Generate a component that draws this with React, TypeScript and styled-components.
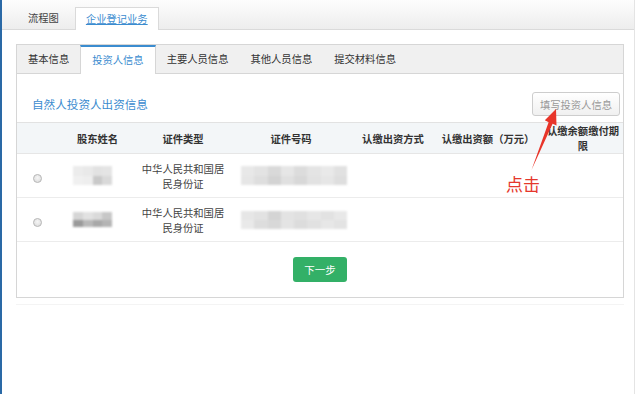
import React from "react";
import styled, { createGlobalStyle, css } from "styled-components";

const GlobalStyle = createGlobalStyle`
  *, *::before, *::after {
    box-sizing: border-box;
  }
  html, body {
    margin: 0;
    padding: 0;
    background: #ffffff;
  }
  body {
    font-family: "Noto Sans CJK SC", "Noto Sans", sans-serif;
    font-size: 10.3px;
    color: #333333;
  }
`;

type MosaicSpec = {
  cols: number;
  width: number;
  height: number;
  cells: string[];
};

const nameMosaics: MosaicSpec[] = [
  {
    cols: 4,
    width: 39,
    height: 19,
    cells: ["#ececec", "#e9e9e9", "#e2e2e2", "#e4e4e4", "#f0f0f0", "#eeeeee", "#c9c9c9", "#d9d9d9"],
  },
  {
    cols: 4,
    width: 39,
    height: 15,
    cells: ["#d6d6d6", "#e2e2e2", "#dadada", "#c7c7c7", "#9a9a9a", "#b8b8b8", "#a8a8a8", "#b4b4b4"],
  },
];

const idMosaics: MosaicSpec[] = [
  {
    cols: 8,
    width: 106,
    height: 19,
    cells: [
      "#e8e8e8", "#e3e3e3", "#d9d9d9", "#e6e6e6", "#dcdcdc", "#e4e4e4", "#e9e9e9", "#e1e1e1",
      "#e6e6e6", "#dedede", "#d3d3d3", "#e0e0e0", "#d8d8d8", "#e2e2e2", "#e6e6e6", "#dedede",
    ],
  },
  {
    cols: 8,
    width: 106,
    height: 18,
    cells: [
      "#e6e6e6", "#e2e2e2", "#d4d4d4", "#e3e3e3", "#e0e0e0", "#e6e6e6", "#e2e2e2", "#e8e8e8",
      "#e9e9e9", "#dddddd", "#d8d8d8", "#e4e4e4", "#dcdcdc", "#e1e1e1", "#e7e7e7", "#e3e3e3",
    ],
  },
];

const columns = [41, 79, 92, 124, 80, 110, 80];

const headers = ["", "股东姓名", "证件类型", "证件号码", "认缴出资方式", "认缴出资额（万元）", "认缴余额缴付期限"];

const subTabs = ["基本信息", "投资人信息", "主要人员信息", "其他人员信息", "提交材料信息"];

function Mosaic({ spec, shift }: { spec: MosaicSpec; shift?: number }) {
  return (
    <MosaicGrid $cols={spec.cols} $w={spec.width} $h={spec.height} $shift={shift || 0}>
      {spec.cells.map((c, i) => (
        <span key={i} style={{ background: c }} />
      ))}
    </MosaicGrid>
  );
}

export default function App() {
  return (
    <>
      <GlobalStyle />
      <Page>
        <TopTabs>
          <TopTab>流程图</TopTab>
          <TopTab $active>企业登记业务</TopTab>
        </TopTabs>

        <Content>
          <Panel>
            <SubTabs>
              {subTabs.map((t) => (
                <SubTab key={t} $active={t === "投资人信息"}>
                  {t}
                </SubTab>
              ))}
            </SubTabs>

            <Toolbar>
              <SectionTitle>自然人投资人出资信息</SectionTitle>
              <GhostButton>填写投资人信息</GhostButton>
            </Toolbar>

            <Table>
              <colgroup>
                {columns.map((w, i) => (
                  <col key={i} style={{ width: w }} />
                ))}
              </colgroup>
              <thead>
                <tr>
                  {headers.map((h, i) => (
                    <HeadCell key={i} $nowrap={i === 5}>
                      {h}
                    </HeadCell>
                  ))}
                </tr>
              </thead>
              <tbody>
                {[0, 1].map((r) => (
                  <tr key={r}>
                    <Cell>
                      <Radio />
                    </Cell>
                    <Cell>
                      <Mosaic spec={nameMosaics[r]} shift={-5} />
                    </Cell>
                    <Cell>中华人民共和国居民身份证</Cell>
                    <Cell>
                      <Mosaic spec={idMosaics[r]} shift={3} />
                    </Cell>
                    <Cell />
                    <Cell />
                    <Cell />
                  </tr>
                ))}
              </tbody>
            </Table>

            <Footer>
              <PrimaryButton>下一步</PrimaryButton>
            </Footer>
          </Panel>
          <Divider />
        </Content>

        <Arrow viewBox="523 105 40 70">
          <polygon points="556,109 556.5,125.5 552.6,123.8 531.5,170 548.6,122.2 544.8,120.2" fill="#e8352a" />
        </Arrow>
        <ClickLabel>点击</ClickLabel>
      </Page>
    </>
  );
}

const Page = styled.div`
  position: relative;
  width: 635px;
  height: 394px;
  border-left: 2px solid #2a69a6;
  border-right: 1px solid #e4e4e4;
  overflow: hidden;
`;

const TopTabs = styled.div`
  height: 30px;
  display: flex;
  align-items: flex-end;
  gap: 4px;
  padding-left: 14px;
  background: linear-gradient(#fdfdfd, #ededed);
  border-bottom: 1px solid #dadada;
`;

const TopTab = styled.div<{ $active?: boolean }>`
  height: 22px;
  line-height: 21px;
  padding: 0 12px;
  color: #444444;
  ${(props) =>
    props.$active &&
    css`
      height: 23px;
      margin-bottom: -1px;
      padding: 0 10px;
      background: #ffffff;
      border: 1px solid #dadada;
      border-bottom: none;
      color: #3b8ccf;
      text-decoration: underline;
    `}
`;

const Content = styled.div`
  padding: 14px 0 0 14px;
`;

const Panel = styled.div`
  width: 608px;
  border: 1px solid #d6d6d6;
`;

const Divider = styled.div`
  width: 608px;
  height: 1px;
  margin-top: 6px;
  background: #f4f4f4;
`;

const SubTabs = styled.div`
  display: flex;
  height: 29px;
  background: #f0f0f0;
  border-bottom: 1px solid #d6d6d6;
`;

const SubTab = styled.div<{ $active?: boolean }>`
  height: 28px;
  line-height: 28px;
  padding: 0 11px;
  color: #333333;
  ${(props) =>
    props.$active &&
    css`
      height: 29px;
      margin-bottom: -1px;
      line-height: 26px;
      background: #ffffff;
      border-top: 2px solid #3b8ccf;
      border-left: 1px solid #d6d6d6;
      border-right: 1px solid #d6d6d6;
      color: #3b8ccf;
    `}
`;

const Toolbar = styled.div`
  display: flex;
  align-items: center;
  justify-content: space-between;
  height: 48px;
  padding: 18px 3px 6px 15px;
`;

const SectionTitle = styled.div`
  font-size: 11.6px;
  color: #3b8ccf;
`;

const GhostButton = styled.button`
  height: 24px;
  padding: 0 7px;
  border: 1px solid #cdcdcd;
  border-radius: 3px;
  background: linear-gradient(#ffffff, #f0f0f0);
  color: #999999;
  font-family: inherit;
  font-size: 10.3px;
  cursor: pointer;
`;

const Table = styled.table`
  width: 100%;
  border-collapse: collapse;
  table-layout: fixed;
`;

const HeadCell = styled.th<{ $nowrap?: boolean }>`
  height: 30px;
  padding: 0 3px;
  background: #f3f6f8;
  border-top: 1px solid #e2e2e2;
  border-bottom: 1px solid #e6e6e6;
  font-weight: bold;
  line-height: 15px;
  text-align: center;
  color: #333333;
  white-space: ${(props) => (props.$nowrap ? "nowrap" : "normal")};
`;

const Cell = styled.td`
  height: 44px;
  padding: 0 4px;
  border-bottom: 1px solid #ececec;
  line-height: 15px;
  text-align: center;
  vertical-align: middle;
  color: #444444;
`;

const Radio = styled.span`
  display: inline-block;
  width: 9px;
  height: 9px;
  margin-top: 2px;
  border: 1px solid #b8b8b8;
  border-radius: 50%;
  background: radial-gradient(circle at 50% 40%, #f6f6f6, #d8d8d8);
  vertical-align: middle;
`;

const MosaicGrid = styled.div<{ $cols: number; $w: number; $h: number; $shift: number }>`
  display: grid;
  grid-template-columns: repeat(${(p) => p.$cols}, 1fr);
  width: ${(p) => p.$w}px;
  height: ${(p) => p.$h}px;
  margin: 0 auto;
  transform: translateX(${(p) => p.$shift}px);
  filter: blur(1.1px);
`;

const Footer = styled.div`
  display: flex;
  justify-content: center;
  padding: 15px 0 15px;
`;

const PrimaryButton = styled.button`
  height: 25px;
  padding: 0 11px;
  border: none;
  border-radius: 3px;
  background: #33b067;
  color: #ffffff;
  font-family: inherit;
  font-size: 10.5px;
  cursor: pointer;
`;

const Arrow = styled.svg`
  position: absolute;
  left: 521px;
  top: 105px;
  width: 40px;
  height: 70px;
  pointer-events: none;
`;

const ClickLabel = styled.div`
  position: absolute;
  left: 504px;
  top: 174px;
  font-size: 17px;
  line-height: 20px;
  color: #e5372c;
  pointer-events: none;
`;
